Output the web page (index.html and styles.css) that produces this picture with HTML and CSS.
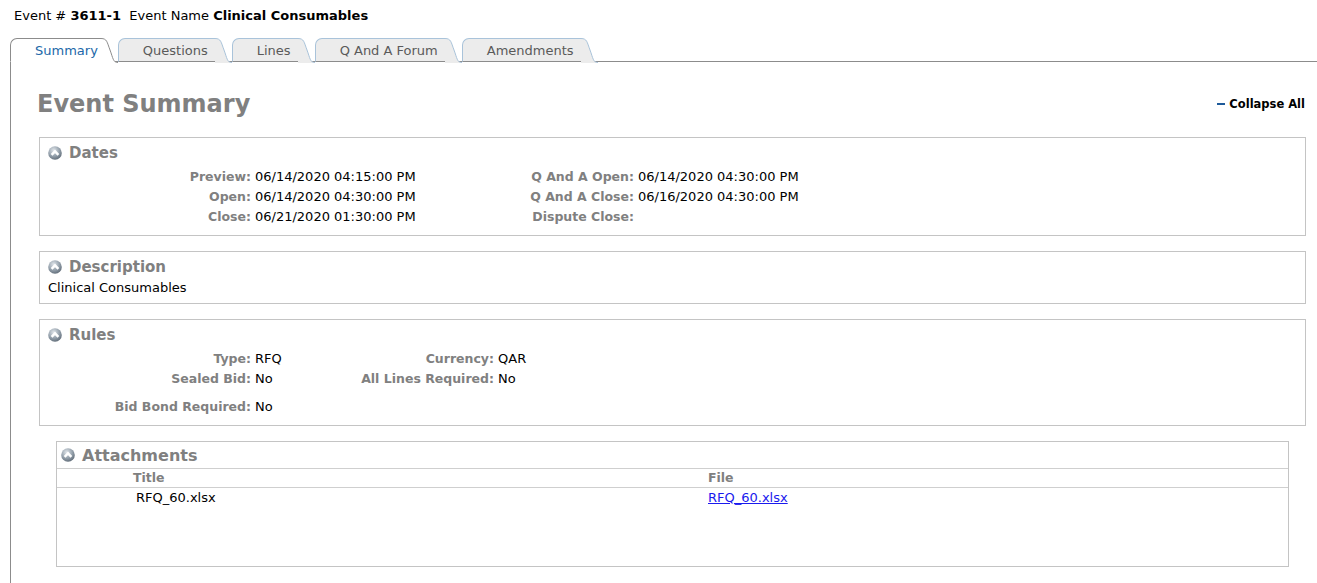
FILE: index.html
```html
<!DOCTYPE html>
<html>
<head>
<meta charset="utf-8">
<link rel="stylesheet" href="styles.css">
</head>
<body>
<div class="top">Event # <b>3611-1</b>&nbsp; Event Name <b>Clinical Consumables</b></div>

<div class="tabs">
  <div class="tab active"><span class="tab-label">Summary</span><svg class="slant" width="17" height="25" viewBox="0 0 17 25"><path class="slant-fill" d="M0 0.5 C6 0.5 6 4 9 12 C12 20 12 24.5 17 24.5 L17 25 L0 25 Z"/><path class="slant-line" d="M0 0.5 C6 0.5 6 4 9 12 C12 20 12 24.5 17 24.5"/></svg></div>
  <div class="tab"><span class="tab-label">Questions</span><svg class="slant" width="17" height="25" viewBox="0 0 17 25"><path class="slant-fill" d="M0 0.5 C6 0.5 6 4 9 12 C12 20 12 24.5 17 24.5 L17 25 L0 25 Z"/><path class="slant-line" d="M0 0.5 C6 0.5 6 4 9 12 C12 20 12 24.5 17 24.5"/></svg></div>
  <div class="tab"><span class="tab-label">Lines</span><svg class="slant" width="17" height="25" viewBox="0 0 17 25"><path class="slant-fill" d="M0 0.5 C6 0.5 6 4 9 12 C12 20 12 24.5 17 24.5 L17 25 L0 25 Z"/><path class="slant-line" d="M0 0.5 C6 0.5 6 4 9 12 C12 20 12 24.5 17 24.5"/></svg></div>
  <div class="tab"><span class="tab-label">Q And A Forum</span><svg class="slant" width="17" height="25" viewBox="0 0 17 25"><path class="slant-fill" d="M0 0.5 C6 0.5 6 4 9 12 C12 20 12 24.5 17 24.5 L17 25 L0 25 Z"/><path class="slant-line" d="M0 0.5 C6 0.5 6 4 9 12 C12 20 12 24.5 17 24.5"/></svg></div>
  <div class="tab"><span class="tab-label">Amendments</span><svg class="slant" width="17" height="25" viewBox="0 0 17 25"><path class="slant-fill" d="M0 0.5 C6 0.5 6 4 9 12 C12 20 12 24.5 17 24.5 L17 25 L0 25 Z"/><path class="slant-line" d="M0 0.5 C6 0.5 6 4 9 12 C12 20 12 24.5 17 24.5"/></svg></div>
</div>

<div class="content">
  <div class="title-row">
    <h1 class="page-title">Event Summary</h1>
    <a class="collapse-all"><span class="dash"></span>Collapse All</a>
  </div>

  <div class="panel dates-panel">
    <div class="panel-head"><svg class="toggle" width="14" height="14" viewBox="0 0 14 14"><defs><radialGradient id="g1" cx="0.4" cy="0.3" r="0.75"><stop offset="0" stop-color="#dfe4e9"/><stop offset="0.55" stop-color="#97a3ae"/><stop offset="1" stop-color="#5c6874"/></radialGradient></defs><circle cx="7" cy="7" r="6.8" fill="url(#g1)"/><path d="M3.6 8.8 L7 5.3 L10.4 8.8" fill="none" stroke="#fff" stroke-width="2.4"/></svg><span>Dates</span></div>
    <div class="grid dates">
      <span class="lbl">Preview:</span><span class="val">06/14/2020 04:15:00 PM</span><span class="lbl">Q And A Open:</span><span class="val">06/14/2020 04:30:00 PM</span>
      <span class="lbl">Open:</span><span class="val">06/14/2020 04:30:00 PM</span><span class="lbl">Q And A Close:</span><span class="val">06/16/2020 04:30:00 PM</span>
      <span class="lbl">Close:</span><span class="val">06/21/2020 01:30:00 PM</span><span class="lbl">Dispute Close:</span><span class="val"></span>
    </div>
  </div>

  <div class="panel desc-panel">
    <div class="panel-head"><svg class="toggle" width="14" height="14" viewBox="0 0 14 14"><circle cx="7" cy="7" r="6.8" fill="url(#g1)"/><path d="M3.6 8.8 L7 5.3 L10.4 8.8" fill="none" stroke="#fff" stroke-width="2.4"/></svg><span>Description</span></div>
    <div class="desc">Clinical Consumables</div>
  </div>

  <div class="panel rules-panel">
    <div class="panel-head"><svg class="toggle" width="14" height="14" viewBox="0 0 14 14"><circle cx="7" cy="7" r="6.8" fill="url(#g1)"/><path d="M3.6 8.8 L7 5.3 L10.4 8.8" fill="none" stroke="#fff" stroke-width="2.4"/></svg><span>Rules</span></div>
    <div class="grid rules">
      <span class="lbl">Type:</span><span class="val">RFQ</span><span class="lbl">Currency:</span><span class="val">QAR</span>
      <span class="lbl">Sealed Bid:</span><span class="val">No</span><span class="lbl">All Lines Required:</span><span class="val">No</span>
      <span class="lbl spaced">Bid Bond Required:</span><span class="val spaced">No</span><span class="spaced"></span><span class="spaced"></span>
    </div>
  </div>

  <div class="attach">
    <div class="attach-head"><svg class="toggle" width="14" height="14" viewBox="0 0 14 14"><circle cx="7" cy="7" r="6.8" fill="url(#g1)"/><path d="M3.6 8.8 L7 5.3 L10.4 8.8" fill="none" stroke="#fff" stroke-width="2.4"/></svg><span>Attachments</span></div>
    <div class="att-cols">
      <span class="col-title">Title</span><span class="col-file">File</span>
    </div>
    <div class="att-row">
      <span class="cell-title">RFQ_60.xlsx</span><a class="cell-file" href="#">RFQ_60.xlsx</a>
    </div>
  </div>
</div>
</body>
</html>
```

FILE: styles.css
```css
html, body {
  margin: 0;
  padding: 0;
  background: #fff;
}
body {
  font-family: "DejaVu Sans", Verdana, sans-serif;
  font-size: 12px;
  color: #000;
  width: 1317px;
  height: 583px;
  overflow: hidden;
}
.top {
  padding: 8px 14px 0;
  font-size: 13px;
  line-height: 15px;
}
.top b { font-weight: bold; }

.tabs {
  display: flex;
  align-items: flex-end;
  margin: 14px 0 0 10px;
  height: 24px;
  border-bottom: 1px solid #8c8c8c;
}
.tab {
  display: flex;
  align-items: stretch;
  height: 24px;
  margin-bottom: -1px;
  position: relative;
}
.tab-label {
  display: flex;
  align-items: center;
  padding: 1px 7px 0 24px;
  height: 24px;
  box-sizing: border-box;
  background: #ececec;
  border: 1px solid #a9c3da;
  border-right: none;
  border-top-left-radius: 7px;
  border-bottom: 1px solid #8c8c8c;
  font-size: 13px;
  color: #5a5a5a;
  white-space: nowrap;
}
.slant {
  display: block;
  height: 25px;
  width: 17px;
  flex: none;
}
.slant-fill { fill: #ececec; }
.slant-line { fill: none; stroke: #a9c3da; stroke-width: 1; }
.tab.active .tab-label {
  background: #fff;
  border-color: #8c8c8c;
  border-bottom: 1px solid #fff;
  color: #2168a9;
  padding-right: 3px;
}
.tab.active .slant-fill { fill: #fff; }
.tab.active .slant-line { stroke: #8c8c8c; }
.tab.active { z-index: 2; }

.content {
  margin-left: 10px;
  border-left: 1px solid #8c8c8c;
  padding: 0 11px 40px 28px;
}
.title-row {
  display: flex;
  justify-content: space-between;
  align-items: center;
  height: 30px;
  padding: 27px 0 18px;
}
.page-title {
  margin: 0 0 0 -2px;
  font-size: 24px;
  font-weight: bold;
  color: #808080;
  line-height: 30px;
}
.collapse-all {
  display: flex;
  align-items: center;
  font-weight: bold;
  font-size: 11.5px;
  color: #000;
  margin-right: 1px;
}
.dash {
  display: inline-block;
  width: 8px;
  height: 2px;
  background: #1d5a9a;
  margin-right: 4px;
}

.panel {
  border: 1px solid #c4c4c4;
  padding: 5px 8px 8px;
  margin-bottom: 15px;
}
.desc-panel { padding-bottom: 5px; }
.rules-panel { padding-bottom: 8px; }
.panel-head {
  display: flex;
  align-items: center;
  height: 20px;
  font-size: 15px;
  font-weight: bold;
  color: #808080;
}
.toggle {
  margin-right: 7px;
  flex: none;
}
.grid {
  display: grid;
  column-gap: 4px;
  margin-top: 4px;
  line-height: 20px;
  font-size: 12.5px;
}
.dates {
  grid-template-columns: 203px 170px 205px auto;
}
.rules {
  grid-template-columns: 203px 100px 135px auto;
}
.lbl {
  text-align: right;
  font-weight: bold;
  color: #808080;
  white-space: nowrap;
}
.val { white-space: nowrap; font-size: 13px; }
.spaced { margin-top: 8px; }
.desc {
  margin-top: 1px;
  line-height: 20px;
  font-size: 13px;
}

.attach {
  margin: 0 17px;
  border: 1px solid #c4c4c4;
  height: 124px;
}
.attach-head {
  display: flex;
  align-items: center;
  height: 26px;
  padding-left: 4px;
  font-size: 16px;
  font-weight: bold;
  color: #808080;
  border-bottom: 1px solid #cfcfcf;
}
.att-cols, .att-row {
  display: grid;
  grid-template-columns: 651px auto;
  font-size: 12.5px;
}
.att-cols {
  height: 18px;
  line-height: 18px;
  border-bottom: 1px solid #cfcfcf;
  font-weight: bold;
  color: #808080;
}
.col-title { padding-left: 76px; }
.att-row {
  line-height: 20px;
  font-size: 13px;
}
.cell-title { padding-left: 79px; }
.cell-file {
  color: #1a1aee;
  text-decoration: underline;
}
```
